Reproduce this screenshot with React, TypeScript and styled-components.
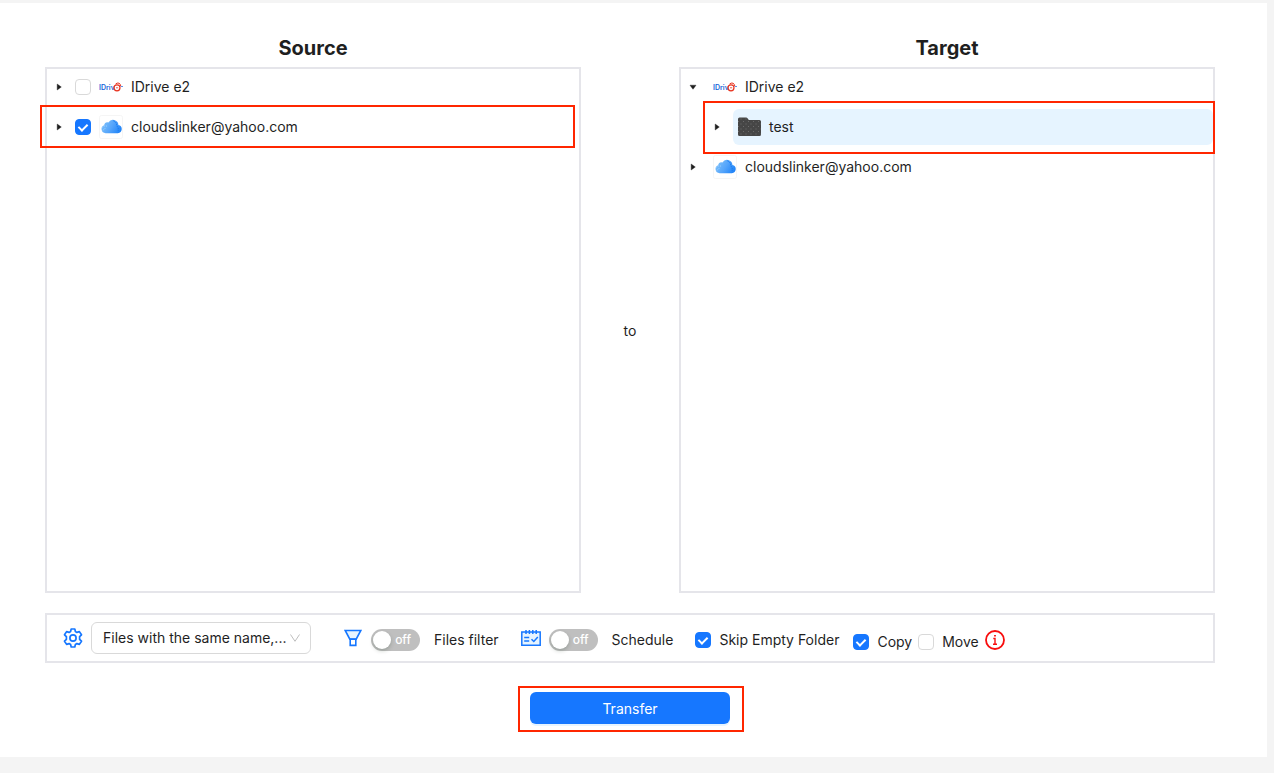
import React, { useState } from "react";
import styled, { createGlobalStyle, css } from "styled-components";

const GlobalStyle = createGlobalStyle`
  *, *::before, *::after { box-sizing: border-box; }
  body {
    margin: 0;
    background: #f4f4f4;
    color: #1f1f1f;
    font-family: Inter, "Liberation Sans", sans-serif;
    font-size: 14px;
    line-height: 22px;
  }
`;

const Page = styled.main`
  display: flex;
  flex-direction: column;
  min-height: calc(100vh - 19px);
  margin: 3px 7px 16px 0;
  padding: 30px 52px 33px 45px;
  background: #fff;
`;

const Panels = styled.div`
  flex: 1;
  display: grid;
  grid-template-columns: 1fr 98px 1fr;
`;

const Column = styled.section`
  display: flex;
  flex-direction: column;
`;

const Title = styled.h2`
  margin: 0;
  padding: 1px 0 5px;
  font-size: 20px;
  font-weight: 700;
  line-height: 28px;
  text-align: center;
`;

const Between = styled.div`
  display: flex;
  align-items: center;
  justify-content: center;
  padding-top: 36px;
`;

const Tree = styled.ul`
  flex: 1;
  display: flex;
  flex-direction: column;
  gap: 4px;
  margin: 0;
  padding: 0;
  border: 2px solid #e5e5ea;
  list-style: none;
`;

const marked = css<{ $mark?: string }>`
  position: relative;
  ${({ $mark }) =>
    $mark &&
    css`
      &::after {
        content: "";
        position: absolute;
        inset: ${$mark};
        border: 2px solid #ff2600;
        pointer-events: none;
      }
    `}
`;

const Node = styled.li<{ $mark?: string; $level?: number }>`
  display: flex;
  align-items: center;
  gap: 4px;
  height: 36px;
  padding-left: ${({ $level = 0 }) => $level * 24}px;
  ${marked}
`;

const Expander = styled.button<{ $open?: boolean }>`
  display: flex;
  align-items: center;
  justify-content: center;
  width: 24px;
  height: 24px;
  padding: 0;
  border: 0;
  background: none;
  color: #1f1f1f;

  svg {
    transform: rotate(${({ $open }) => ($open ? 90 : 0)}deg);
  }
`;

const NodeLabel = styled.label<{ $selected?: boolean }>`
  flex: 1;
  display: flex;
  align-items: center;
  gap: 8px;
  height: 36px;
  padding: 0 4px;
  border-radius: 6px;
  background: ${({ $selected }) => ($selected ? "#e6f4ff" : "transparent")};
`;

const Checkbox = styled.input.attrs({ type: "checkbox" })`
  appearance: none;
  flex: none;
  position: relative;
  width: 16px;
  height: 16px;
  margin: 0;
  border: 1px solid #d9d9d9;
  border-radius: 4px;
  background: #fff;

  &:checked {
    border-color: #1677ff;
    background: #1677ff;
  }

  &:checked::after {
    content: "";
    position: absolute;
    top: 2px;
    left: 4px;
    width: 6px;
    height: 9px;
    border: solid #fff;
    border-width: 0 2px 2px 0;
    transform: rotate(45deg);
  }
`;

const Options = styled.form`
  display: flex;
  align-items: center;
  min-height: 50px;
  margin-top: 20px;
  padding: 0 16px;
  border: 2px solid #e5e5ea;
`;

const OptionGroup = styled.div<{ $left?: number; $gap?: number; $drop?: number }>`
  display: flex;
  align-items: center;
  gap: ${({ $gap = 8 }) => $gap}px;
  margin-left: ${({ $left = 0 }) => $left}px;
  padding-top: ${({ $drop = 0 }) => $drop}px;
`;

const CheckLabel = styled.label`
  display: flex;
  align-items: center;
  gap: 8px;
`;

const SelectBox = styled.div`
  display: grid;
  align-items: center;
  width: 220px;

  > * {
    grid-area: 1 / 1;
  }

  svg {
    justify-self: end;
    margin-right: 10px;
    pointer-events: none;
  }
`;

const Select = styled.select`
  appearance: none;
  width: 100%;
  height: 32px;
  padding: 0 22px 0 11px;
  border: 1px solid #d9d9d9;
  border-radius: 6px;
  background: #fff;
  color: #1f1f1f;
  font: inherit;
`;

const SwitchBox = styled.span`
  display: grid;
  align-items: center;
  width: 49px;

  > * {
    grid-area: 1 / 1;
  }
`;

const SwitchInput = styled.input.attrs({ type: "checkbox", role: "switch" })`
  appearance: none;
  display: flex;
  align-items: center;
  width: 100%;
  height: 22px;
  margin: 0;
  padding: 2px;
  border-radius: 11px;
  background: #bfbfbf;

  &::before {
    content: "";
    width: 18px;
    height: 18px;
    border-radius: 9px;
    background: #fff;
    box-shadow: 0 2px 4px rgba(0, 35, 11, 0.2);
  }

  &:checked {
    justify-content: flex-end;
    background: #1677ff;
  }
`;

const SwitchText = styled.span<{ $on: boolean }>`
  justify-self: ${({ $on }) => ($on ? "start" : "end")};
  padding: 0 9px;
  color: #fff;
  font-size: 12px;
  font-weight: 500;
  pointer-events: none;
`;

const Actions = styled.div`
  display: flex;
  justify-content: center;
  margin-top: 29px;
`;

const ButtonFrame = styled.div<{ $mark?: string }>`
  ${marked}
`;

const PrimaryButton = styled.button`
  display: block;
  width: 200px;
  height: 32px;
  padding: 2px 0 0;
  border: 0;
  border-radius: 6px;
  background: #1677ff;
  box-shadow: 0 2px 0 rgba(5, 145, 255, 0.1);
  color: #fff;
  font: inherit;
`;

const Icon = styled.svg`
  display: block;
  flex: none;
`;

const Caret = () => (
  <Icon width="8" height="8" viewBox="0 0 8 8" aria-hidden="true">
    <path d="M2.2 1v6L6.3 4z" fill="currentColor" stroke="currentColor" strokeWidth=".4" />
  </Icon>
);

const IDriveLogo = () => (
  <Icon width="24" height="24" viewBox="0 0 24 24" aria-hidden="true">
    <text x="0" y="15" fontSize="7" fontWeight="600" fill="#1a66d9">
      IDriv
    </text>
    <g fill="none" stroke="#e8321e">
      <circle cx="18" cy="12.800" r="3" strokeWidth="1.200" />
      <path d="M16.600 9q1.400-1.400 3.400-.8 1.600.8 1.800 3" strokeWidth="1" />
      <path d="M17 12.800h2.200" strokeWidth=".8" />
    </g>
    <path d="M21.800 11.500h2.200" stroke="#5f92e6" />
  </Icon>
);

const CloudLogo = () => (
  <Icon width="24" height="24" viewBox="0 0 24 24" aria-hidden="true">
    <defs>
      <linearGradient id="cloud" x1="0" x2="1" y1=".3" y2=".7">
        <stop offset="0" stopColor="#7dc0fa" />
        <stop offset=".5" stopColor="#55a5fb" />
        <stop offset="1" stopColor="#1f83f8" />
      </linearGradient>
    </defs>
    <rect x=".5" y=".5" width="23" height="23" rx="2" fill="#fff" stroke="#f5f5f5" />
    <path
      d="M6.600 18.200a4.100 4.100 0 0 1-1.500-7.900 3.600 3.600 0 0 1 4.300-2.800 5.400 5.400 0 0 1 10 2.400 4.200 4.200 0 0 1-.6 8.300z"
      fill="url(#cloud)"
    />
    <path d="M3.400 12.400q2-2.200 4.600-1.200M4 15.400q1-2 3-2" fill="none" stroke="#b5dcfd" strokeWidth=".8" strokeDasharray="1 1" />
    <path d="M14.400 5.800q3.400 1.200 3.200 5 2.200 1.800 1.600 5" fill="none" stroke="#1478f2" strokeWidth="1" strokeDasharray="1.400 .8" />
  </Icon>
);

const FolderIcon = () => (
  <Icon width="24" height="24" viewBox="0 0 24 24" aria-hidden="true">
    <defs>
      <pattern id="grain" width="5" height="5" patternUnits="userSpaceOnUse">
        <rect width="5" height="5" fill="#464646" />
        <path d="M1 1h1v1H1zM3.500 3.500h1v1h-1z" fill="#6c6c6c" />
      </pattern>
    </defs>
    <path
      d="M1 4q0-1.500 1.500-1.500h6.700q.8 0 1.300.7l1.300 1.900h10.700q1.500 0 1.500 1.500v13q0 1.500-1.500 1.500h-20Q1 21.100 1 19.600z"
      fill="url(#grain)"
    />
  </Icon>
);

const GearIcon = () => (
  <Icon width="20" height="20" viewBox="0 0 20 20" fill="none" stroke="#1677ff" strokeWidth="1.700" strokeLinejoin="round" aria-hidden="true">
    <path d="M8.200 1h3.600l.6 2.500 1.500.9 2.500-.8 2.100 3.200-1.900 1.900v2.600l1.900 1.900-2.100 3.200-2.500-.8-1.500.9-.6 2.500H8.200l-.6-2.500-1.500-.9-2.500.8-2.100-3.200 1.900-1.900V8.700L1.500 6.800l2.100-3.200 2.500.8 1.500-.9z" />
    <circle cx="10" cy="10" r="3.100" />
  </Icon>
);

const FilterIcon = () => (
  <Icon width="18" height="18" viewBox="0 0 18 18" stroke="#1677ff" strokeWidth="1.600" aria-hidden="true">
    <path d="M1.200 1.500h15.600l-4.600 8.600H5.800z" fill="#e6f4ff" />
    <path d="M6.200 10.200h5.600v6.200H6.200z" fill="#fff" />
  </Icon>
);

const CalendarIcon = () => (
  <Icon width="20" height="18" viewBox="0 0 20 18" fill="none" stroke="#1677ff" strokeWidth="1.500" aria-hidden="true">
    <path d="M.8 3h18.400v13.200H.8z" fill="#e6f4ff" />
    <path d="M5 1v4M8.400 1v4M11.800 1v4M15.200 1v4M3.200 8.500h5M3.200 12h5M10.500 10.200l2.300 2.300 4-4.600" />
  </Icon>
);

const ChevronIcon = () => (
  <Icon width="12" height="12" viewBox="0 0 12 12" fill="none" stroke="#bfbfbf" aria-hidden="true">
    <path d="M1.500 2.500 6 9.300l4.500-6.800" />
  </Icon>
);

const InfoIcon = () => (
  <Icon width="20" height="20" viewBox="0 0 20 20" fill="none" stroke="#f80d0d" strokeWidth="1.800" role="img" aria-label="Information">
    <circle cx="10" cy="10" r="9" />
    <path d="M8.300 8.500H10v5.500M8 14.300h4M9.100 5.700h1.800" strokeWidth="1.400" />
  </Icon>
);

const Switch = ({ id }: { id: string }) => {
  const [on, setOn] = useState(false);
  return (
    <SwitchBox>
      <SwitchInput id={id} checked={on} onChange={() => setOn(!on)} />
      <SwitchText $on={on}>{on ? "on" : "off"}</SwitchText>
    </SwitchBox>
  );
};

export default function App() {
  return (
    <>
      <GlobalStyle />
      <Page>
        <Panels>
          <Column>
            <Title>Source</Title>
            <Tree>
              <Node>
                <Expander aria-label="Expand IDrive e2"><Caret /></Expander>
                <Checkbox id="source-idrive" />
                <NodeLabel htmlFor="source-idrive"><IDriveLogo />IDrive e2</NodeLabel>
              </Node>
              <Node $mark="-4px 4px -3px -7px">
                <Expander aria-label="Expand cloudslinker@yahoo.com"><Caret /></Expander>
                <Checkbox id="source-cloud" defaultChecked />
                <NodeLabel htmlFor="source-cloud"><CloudLogo />cloudslinker@yahoo.com</NodeLabel>
              </Node>
            </Tree>
          </Column>
          <Between>to</Between>
          <Column>
            <Title>Target</Title>
            <Tree>
              <Node>
                <Expander $open aria-label="Collapse IDrive e2"><Caret /></Expander>
                <NodeLabel as="span"><IDriveLogo />IDrive e2</NodeLabel>
              </Node>
              <Node $level={1} $mark="-8px -2px -9px 22px">
                <Expander aria-label="Expand test"><Caret /></Expander>
                <NodeLabel as="span" $selected><FolderIcon />test</NodeLabel>
              </Node>
              <Node>
                <Expander aria-label="Expand cloudslinker@yahoo.com"><Caret /></Expander>
                <NodeLabel as="span"><CloudLogo />cloudslinker@yahoo.com</NodeLabel>
              </Node>
            </Tree>
          </Column>
        </Panels>

        <Options>
          <OptionGroup>
            <GearIcon />
            <SelectBox>
              <Select aria-label="Files with the same name">
                <option>Files with the same name,...</option>
              </Select>
              <ChevronIcon />
            </SelectBox>
          </OptionGroup>
          <OptionGroup $left={33}>
            <FilterIcon />
          </OptionGroup>
          <OptionGroup $left={9} $gap={14} $drop={4}>
            <Switch id="files-filter" />
            <label htmlFor="files-filter">Files filter</label>
          </OptionGroup>
          <OptionGroup $left={22}>
            <CalendarIcon />
          </OptionGroup>
          <OptionGroup $left={8} $gap={14} $drop={4}>
            <Switch id="schedule" />
            <label htmlFor="schedule">Schedule</label>
          </OptionGroup>
          <OptionGroup $left={22} $drop={4}>
            <CheckLabel><Checkbox defaultChecked />Skip Empty Folder</CheckLabel>
          </OptionGroup>
          <OptionGroup $left={14} $gap={6} $drop={8}>
            <CheckLabel><Checkbox defaultChecked />Copy</CheckLabel>
            <CheckLabel><Checkbox />Move</CheckLabel>
          </OptionGroup>
          <OptionGroup $left={6} $drop={4}>
            <InfoIcon />
          </OptionGroup>
        </Options>

        <Actions>
          <ButtonFrame $mark="-6px -14px -8px -12px">
            <PrimaryButton type="button">Transfer</PrimaryButton>
          </ButtonFrame>
        </Actions>
      </Page>
    </>
  );
}
